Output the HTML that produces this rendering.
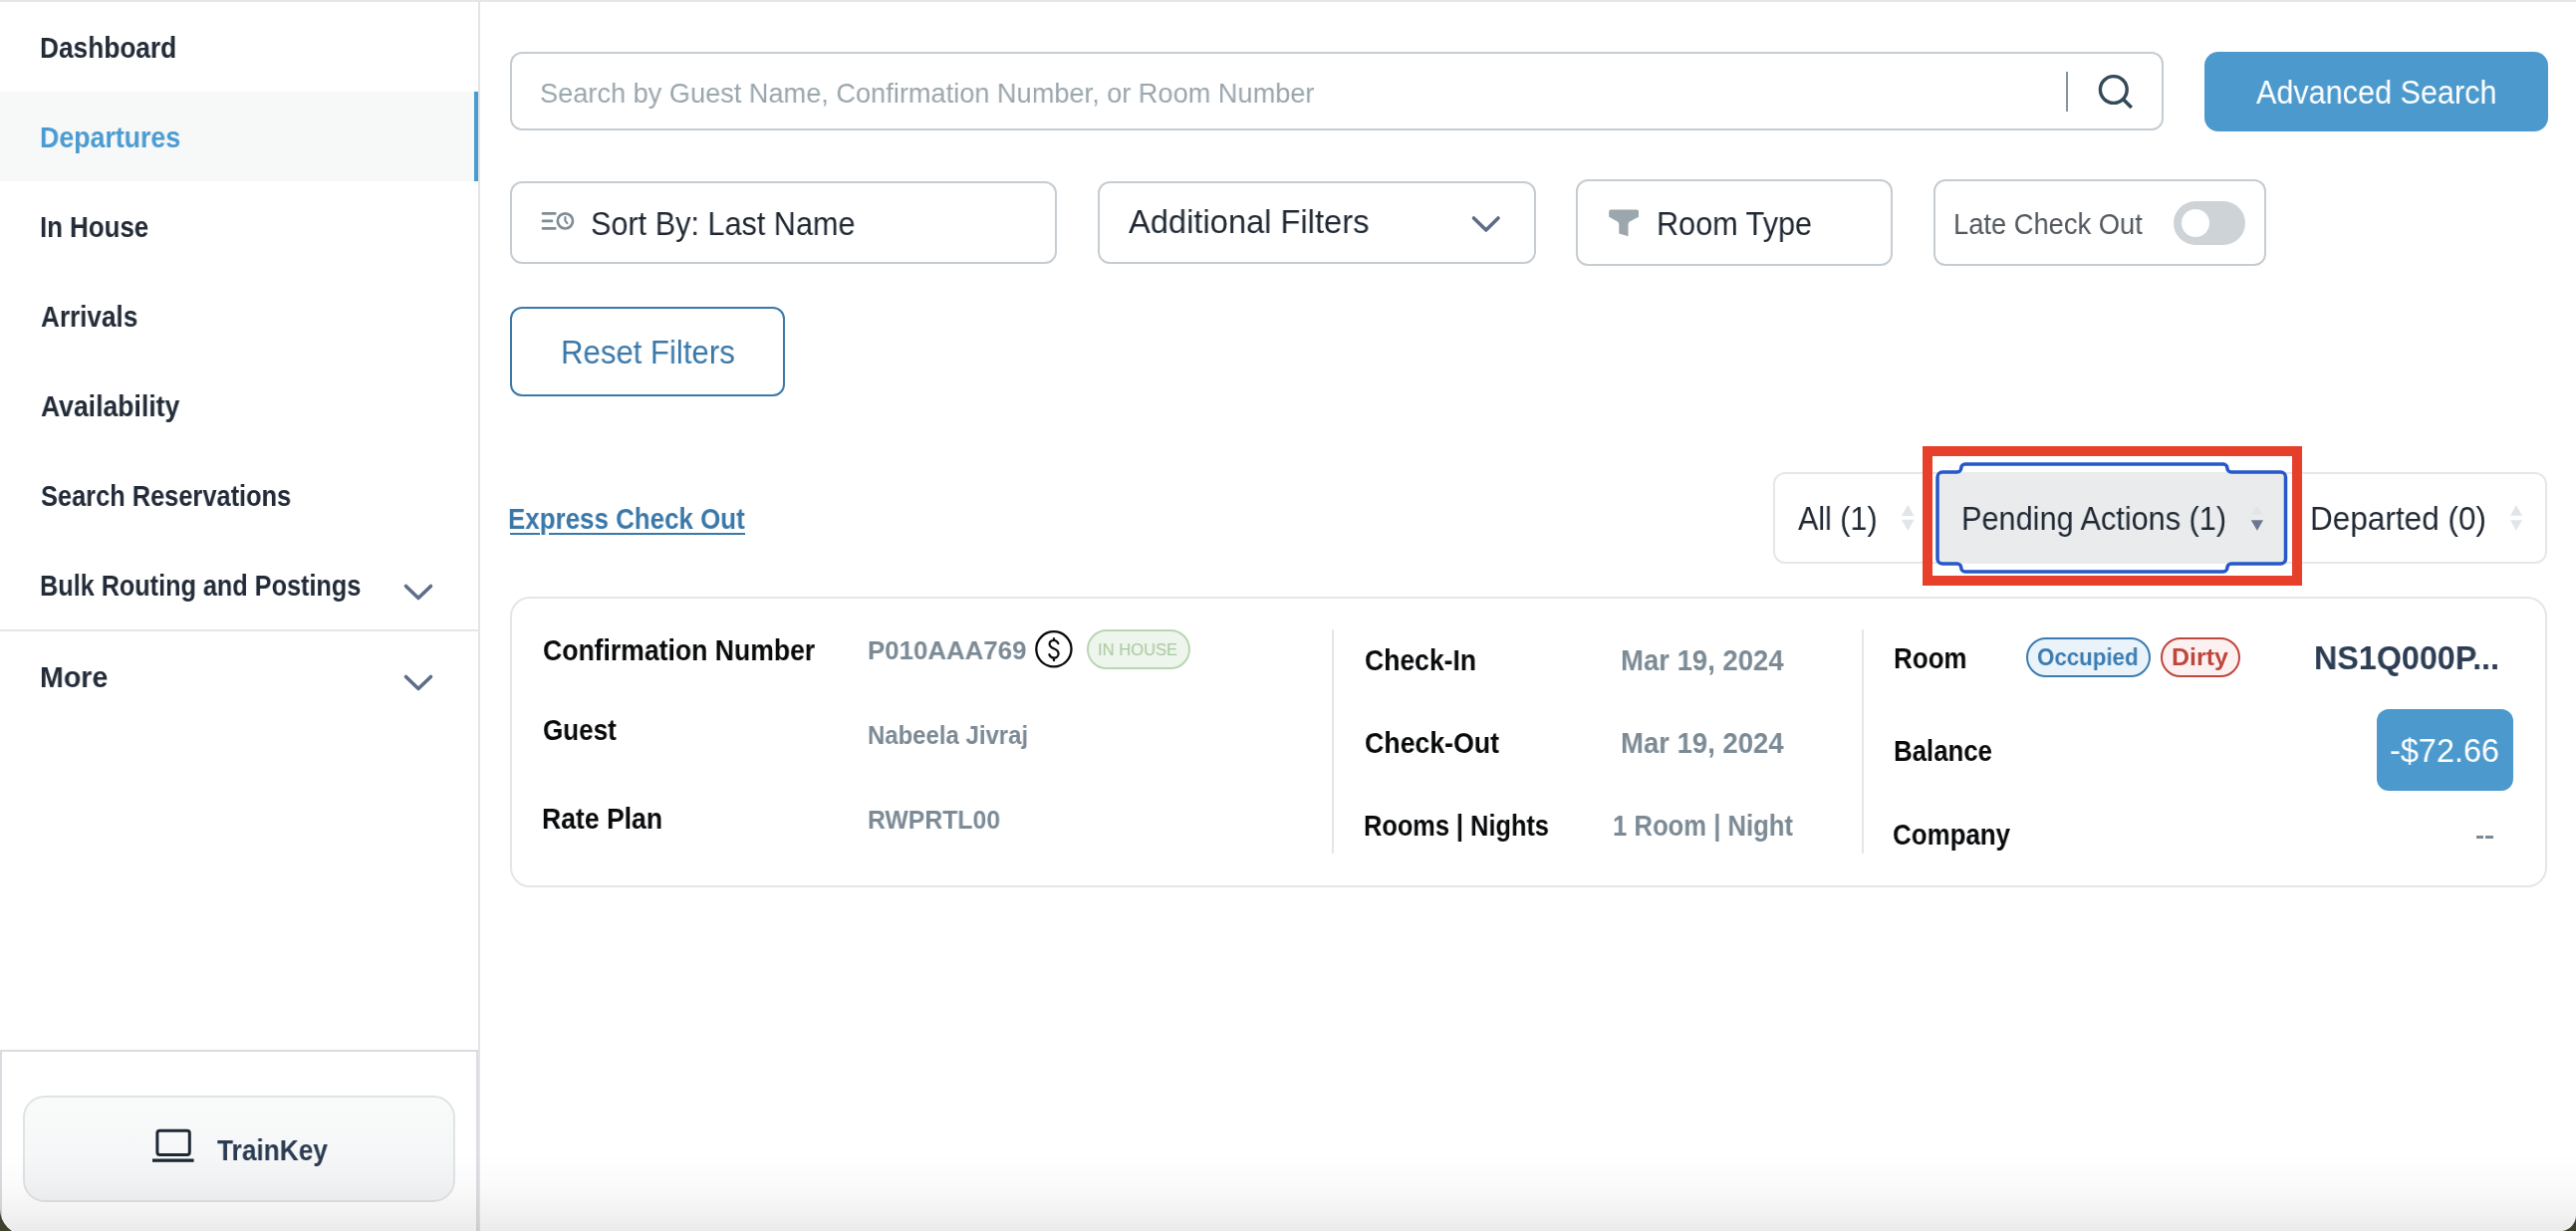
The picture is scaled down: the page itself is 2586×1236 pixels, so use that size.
<!DOCTYPE html>
<html><head><meta charset="utf-8"><title>Departures</title>
<style>
html,body{margin:0;padding:0;background:#fff;}
body{width:2586px;height:1236px;position:relative;overflow:hidden;font-family:"Liberation Sans",sans-serif;}
.t{position:absolute;white-space:nowrap;line-height:1;transform-origin:0 0;will-change:transform;}
.abs{position:absolute;box-sizing:border-box;}
.topline{left:0;top:0;width:2586px;height:2px;background:#e3e7e9;}
.sidebar{left:0;top:2px;width:480px;height:1234px;}
.sb-border{left:480px;top:2px;width:2px;height:1234px;background:#e3e4e5;}
.active{left:0;top:92px;width:476px;height:90px;background:#f7f8f8;}
.activebar{left:476px;top:92px;width:4px;height:90px;background:#4a9bd1;}
.divider{left:0;top:632px;width:480px;height:2px;background:#e3e7ea;}
.bottompanel{left:0;top:1054px;width:480px;height:190px;border:2px solid #d9dde1;border-right-width:2px;}
.trainkey{left:23px;top:1100px;width:434px;height:107px;border:2px solid #e0e3e6;border-radius:22px;background:linear-gradient(180deg,#f9fafa,#f3f4f5);}
.inp{border:2px solid #c6cdd2;border-radius:12px;background:#fff;}
.btn-primary{background:#4c9acd;border-radius:14px;}
.reset{border:2px solid #3b79ab;border-radius:12px;}
.tabs{border:2px solid #e4e8eb;border-radius:12px;}
.th-active{background:#e9ebec;}
.card{border:2px solid #e3e7ea;border-radius:20px;}
.vdiv{width:2px;background:#e3e7ea;}
.pill{border-radius:22px;}
.shade{left:0;top:1158px;width:2586px;height:78px;background:linear-gradient(180deg,rgba(0,0,0,0) 0%,rgba(0,0,0,0.016) 40%,rgba(0,0,0,0.042) 70%,rgba(0,0,0,0.08) 100%);}
svg{position:absolute;left:0;top:0;overflow:visible;}
</style></head>
<body>
<div class="abs topline"></div>
<!-- Sidebar -->
<nav class="abs sidebar"></nav>
<div class="abs active"></div>
<div class="abs activebar"></div>
<div class="abs sb-border"></div>
<div class="abs divider"></div>
<div class="abs bottompanel"></div>
<div class="abs trainkey"></div>

<!-- Main -->
<div class="abs inp" style="left:512px;top:52px;width:1660px;height:79px;"></div>
<div class="abs" style="left:2074px;top:72px;width:2px;height:40px;background:#8595a0;"></div>
<div class="abs btn-primary" style="left:2213px;top:52px;width:345px;height:80px;"></div>

<div class="abs inp" style="left:512px;top:182px;width:549px;height:83px;"></div>
<div class="abs inp" style="left:1102px;top:182px;width:440px;height:83px;"></div>
<div class="abs inp" style="left:1582px;top:180px;width:318px;height:87px;"></div>
<div class="abs inp" style="left:1941px;top:180px;width:334px;height:87px;"></div>
<div class="abs" style="left:2182px;top:202px;width:72px;height:44px;border-radius:22px;background:#ced3d7;"></div>
<div class="abs" style="left:2190px;top:210px;width:28px;height:28px;border-radius:14px;background:#fff;"></div>

<div class="abs reset" style="left:512px;top:308px;width:276px;height:90px;"></div>
<div class="abs" style="left:512px;top:535px;width:30px;height:2px;background:#3a78a9;"></div>
<div class="abs" style="left:551px;top:535px;width:196.5px;height:2px;background:#3a78a9;"></div>

<div class="abs tabs" style="left:1780px;top:474px;width:777px;height:92px;"></div>
<div class="abs th-active" style="left:1946px;top:474px;width:349px;height:92px;"></div>

<div class="abs card" style="left:512px;top:599px;width:2045px;height:292px;"></div>
<div class="abs vdiv" style="left:1337px;top:632px;height:225px;"></div>
<div class="abs vdiv" style="left:1869px;top:632px;height:225px;"></div>

<div class="abs pill" style="left:1091px;top:632px;width:104px;height:40px;border:2px solid #b9d6b1;background:#eef5ec;"></div>
<div class="abs pill" style="left:2034px;top:640px;width:125px;height:40px;border:2.5px solid #3a7cb3;background:#eaf3f9;"></div>
<div class="abs pill" style="left:2169px;top:640px;width:80px;height:40px;border:2.5px solid #bf463c;background:#fcf1f0;"></div>
<div class="abs" style="left:2386px;top:712px;width:137px;height:82px;border-radius:12px;background:#4c9acd;"></div>
<div class="abs" style="left:2485.8px;top:839px;width:7.1px;height:2.8px;background:#7b8a95;"></div>
<div class="abs" style="left:2495.3px;top:839px;width:7.4px;height:2.8px;background:#7b8a95;"></div>

<!-- Icons -->
<svg width="2586" height="1236" viewBox="0 0 2586 1236">
  <!-- chevrons -->
  <path d="M407.5 588.5 L420 600.5 L432.5 588.5" fill="none" stroke="#5e6d89" stroke-width="3.6" stroke-linecap="round" stroke-linejoin="round"/>
  <path d="M407.5 679.5 L420 691.5 L432.5 679.5" fill="none" stroke="#5e6d89" stroke-width="3.6" stroke-linecap="round" stroke-linejoin="round"/>
  <path d="M1479.5 219 L1491.8 231 L1504 219" fill="none" stroke="#5e6d89" stroke-width="3.6" stroke-linecap="round" stroke-linejoin="round"/>
  <!-- laptop -->
  <rect x="157.9" y="1135.3" width="32.4" height="24.2" rx="2.5" fill="none" stroke="#1f2936" stroke-width="3"/>
  <rect x="153" y="1163.5" width="41.6" height="3.3" fill="#1f2936"/>
  <!-- search icon -->
  <circle cx="2121.8" cy="90" r="13.4" fill="none" stroke="#344a59" stroke-width="3.4"/>
  <path d="M2131.5 99.8 L2138.5 106.8" stroke="#344a59" stroke-width="3.6" stroke-linecap="square"/>
  <!-- sort icon -->
  <g stroke="#7f8d96" stroke-width="2.7" stroke-linecap="round" fill="none">
    <path d="M545 214.4 H557.2"/><path d="M545 221.9 H554"/><path d="M545 229.4 H557.2"/>
    <circle cx="567.4" cy="221.9" r="7.6"/>
    <path d="M567.4 218.2 V221.6 L569.4 224.2" stroke-width="2.2"/>
  </g>
  <!-- funnel -->
  <path d="M1617 210.4 H1643 Q1645 210.4 1645 212.4 V217.8 L1636 222.6 Q1634.5 223.6 1634.5 226 V237.2 L1625.3 234.6 V226 Q1625.3 223.6 1623.8 222.6 L1615.2 217.8 V212.4 Q1615.2 210.4 1617 210.4 Z" fill="#9ba7ad"/>
  <!-- dollar icon -->
  <circle cx="1057.9" cy="651.8" r="17.6" fill="none" stroke="#0a0a0a" stroke-width="2.3"/>
  <path d="M1062.4 646.2 C1061.6 644.2 1060 643 1058 643 C1055.4 643 1053.6 644.6 1053.6 646.8 C1053.6 649.2 1055.6 650.3 1058 651.3 C1060.6 652.3 1062.6 653.5 1062.6 656.3 C1062.6 658.8 1060.6 660.6 1058 660.6 C1055.6 660.6 1054 659.2 1053.3 657.2" fill="none" stroke="#0a0a0a" stroke-width="2.2" stroke-linecap="round"/>
  <path d="M1058 640.2 V643 M1058 660.6 V663.9" stroke="#0a0a0a" stroke-width="2.2"/>
  <!-- sort arrows -->
  <g fill="#e1e5e8">
    <path d="M1909 518 L1915.2 506.8 L1921.5 518 Z"/><path d="M1909 521.8 L1921.5 521.8 L1915.2 533 Z"/>
    <path d="M2260 516.5 L2266 508 L2272 516.5 Z"/>
    <path d="M2520 517.7 L2526 507.2 L2532 517.7 Z"/><path d="M2520 522.2 L2532 522.2 L2526 532.7 Z"/>
  </g>
  <path d="M2259.8 522.2 L2272 522.2 L2265.9 532.7 Z" fill="#6b7890"/>
  <!-- focus ring -->
  <path d="M1945 479 A5 5 0 0 1 1950 474 L1964.75 474 A4 4 0 0 0 1968.75 470 A4 4 0 0 1 1972.75 466 L2231.9 466 A4 4 0 0 1 2235.9 470 A4 4 0 0 0 2239.9 474 L2289.5 474 A5 5 0 0 1 2294.5 479 L2294.5 561 A5 5 0 0 1 2289.5 566 L2239.9 566 A4 4 0 0 0 2235.9 570 A4 4 0 0 1 2231.9 574 L1972.75 574 A4 4 0 0 1 1968.75 570 A4 4 0 0 0 1964.75 566 L1950 566 A5 5 0 0 1 1945 561 Z" fill="none" stroke="#2658c9" stroke-width="3.5"/>
  <!-- annotation box -->
  <rect x="1935" y="453" width="371" height="130" fill="none" stroke="#e7402a" stroke-width="10"/>
</svg>

<span class="t" style="left:39.80px;top:33.90px;font-size:29px;font-weight:700;color:#222b37;transform:scaleX(0.9056);">Dashboard</span>
<span class="t" style="left:39.80px;top:123.90px;font-size:29px;font-weight:700;color:#4a9bd1;transform:scaleX(0.9221);">Departures</span>
<span class="t" style="left:39.80px;top:213.50px;font-size:29px;font-weight:700;color:#222b37;transform:scaleX(0.8914);">In House</span>
<span class="t" style="left:40.80px;top:304.00px;font-size:29px;font-weight:700;color:#222b37;transform:scaleX(0.9000);">Arrivals</span>
<span class="t" style="left:40.80px;top:394.00px;font-size:29px;font-weight:700;color:#222b37;transform:scaleX(0.9158);">Availability</span>
<span class="t" style="left:40.80px;top:484.00px;font-size:29px;font-weight:700;color:#222b37;transform:scaleX(0.8756);">Search Reservations</span>
<span class="t" style="left:39.80px;top:574.00px;font-size:29px;font-weight:700;color:#222b37;transform:scaleX(0.8696);">Bulk Routing and Postings</span>
<span class="t" style="left:39.80px;top:665.75px;font-size:29px;font-weight:700;color:#222b37;transform:scaleX(0.9848);">More</span>
<span class="t" style="left:218.40px;top:1140.70px;font-size:29px;font-weight:700;color:#2a3b52;transform:scaleX(0.9061);">TrainKey</span>
<span class="t" style="left:541.60px;top:79.75px;font-size:28px;font-weight:400;color:#9aa6ad;transform:scaleX(0.9701);">Search by Guest Name, Confirmation Number, or Room Number</span>
<span class="t" style="left:2264.80px;top:75.60px;font-size:33px;font-weight:400;color:#ffffff;transform:scaleX(0.9267);">Advanced Search</span>
<span class="t" style="left:593.00px;top:208.00px;font-size:33px;font-weight:400;color:#1f2833;transform:scaleX(0.9279);">Sort By: Last Name</span>
<span class="t" style="left:1132.50px;top:206.00px;font-size:33px;font-weight:400;color:#1f2833;transform:scaleX(0.9898);">Additional Filters</span>
<span class="t" style="left:1663.00px;top:207.50px;font-size:33px;font-weight:400;color:#1f2833;transform:scaleX(0.9279);">Room Type</span>
<span class="t" style="left:1961.00px;top:210.80px;font-size:29px;font-weight:400;color:#52585e;transform:scaleX(0.9419);">Late Check Out</span>
<span class="t" style="left:562.60px;top:337.00px;font-size:33px;font-weight:400;color:#3a78a9;transform:scaleX(0.9436);">Reset Filters</span>
<span class="t" style="left:510.20px;top:507.00px;font-size:29px;font-weight:700;color:#3a78a9;transform:scaleX(0.8940);">Express Check Out</span>
<span class="t" style="left:1804.50px;top:503.90px;font-size:33px;font-weight:400;color:#1f2833;transform:scaleX(0.9231);">All (1)</span>
<span class="t" style="left:1968.50px;top:503.90px;font-size:33px;font-weight:400;color:#1f2833;transform:scaleX(0.9297);">Pending Actions (1)</span>
<span class="t" style="left:2318.50px;top:504.00px;font-size:33px;font-weight:400;color:#1f2833;transform:scaleX(0.9549);">Departed (0)</span>
<span class="t" style="left:545.40px;top:638.90px;font-size:29px;font-weight:700;color:#080a0c;transform:scaleX(0.9164);">Confirmation Number</span>
<span class="t" style="left:545.00px;top:719.00px;font-size:29px;font-weight:700;color:#080a0c;transform:scaleX(0.8973);">Guest</span>
<span class="t" style="left:544.00px;top:808.20px;font-size:29px;font-weight:700;color:#080a0c;transform:scaleX(0.9158);">Rate Plan</span>
<span class="t" style="left:871.00px;top:639.90px;font-size:26px;font-weight:700;color:#7b8a95;transform:scaleX(0.9938);">P010AAA769</span>
<span class="t" style="left:871.00px;top:724.90px;font-size:26px;font-weight:700;color:#7b8a95;transform:scaleX(0.9207);">Nabeela Jivraj</span>
<span class="t" style="left:871.00px;top:809.70px;font-size:26px;font-weight:700;color:#7b8a95;transform:scaleX(0.9526);">RWPRTL00</span>
<span class="t" style="left:1102.40px;top:643.50px;font-size:17px;font-weight:400;color:#a7c89e;transform:scaleX(0.9753);">IN HOUSE</span>
<span class="t" style="left:1370.00px;top:649.00px;font-size:29px;font-weight:700;color:#080a0c;transform:scaleX(0.9143);">Check-In</span>
<span class="t" style="left:1370.00px;top:732.00px;font-size:29px;font-weight:700;color:#080a0c;transform:scaleX(0.9207);">Check-Out</span>
<span class="t" style="left:1369.00px;top:814.50px;font-size:29px;font-weight:700;color:#080a0c;transform:scaleX(0.8743);">Rooms | Nights</span>
<span class="t" style="left:1627.00px;top:648.90px;font-size:29px;font-weight:700;color:#7b8a95;transform:scaleX(0.9478);">Mar 19, 2024</span>
<span class="t" style="left:1627.00px;top:731.90px;font-size:29px;font-weight:700;color:#7b8a95;transform:scaleX(0.9478);">Mar 19, 2024</span>
<span class="t" style="left:1619.00px;top:814.50px;font-size:29px;font-weight:700;color:#7b8a95;transform:scaleX(0.8845);">1 Room | Night</span>
<span class="t" style="left:1900.50px;top:647.25px;font-size:29px;font-weight:700;color:#080a0c;transform:scaleX(0.8950);">Room</span>
<span class="t" style="left:1900.50px;top:739.75px;font-size:29px;font-weight:700;color:#080a0c;transform:scaleX(0.8899);">Balance</span>
<span class="t" style="left:1900.20px;top:824.00px;font-size:29px;font-weight:700;color:#080a0c;transform:scaleX(0.8931);">Company</span>
<span class="t" style="left:2045.00px;top:648.10px;font-size:24px;font-weight:700;color:#3a7cb3;transform:scaleX(0.9289);">Occupied</span>
<span class="t" style="left:2180.00px;top:648.10px;font-size:24px;font-weight:700;color:#bf463c;transform:scaleX(1.0398);">Dirty</span>
<span class="t" style="left:2323.40px;top:643.90px;font-size:33px;font-weight:700;color:#2c3d54;transform:scaleX(0.9782);">NS1Q000P...</span>
<span class="t" style="left:2399.40px;top:737.00px;font-size:33px;font-weight:400;color:#ffffff;transform:scaleX(0.9832);">-$72.66</span>

<div class="abs shade"></div>
<div class="abs" style="left:-14px;top:1200px;width:28px;height:56px;background:#3d4230;border-radius:0;clip-path:path('M0 0 H14 V14 A26 26 0 0 0 40 40 V56 H0 Z');"></div>
<div class="abs" style="left:2572px;top:1206px;width:28px;height:40px;background:#3d4230;clip-path:path('M14 0 H28 V40 H0 V30 A16 16 0 0 0 14 14 Z');"></div>
</body></html>
